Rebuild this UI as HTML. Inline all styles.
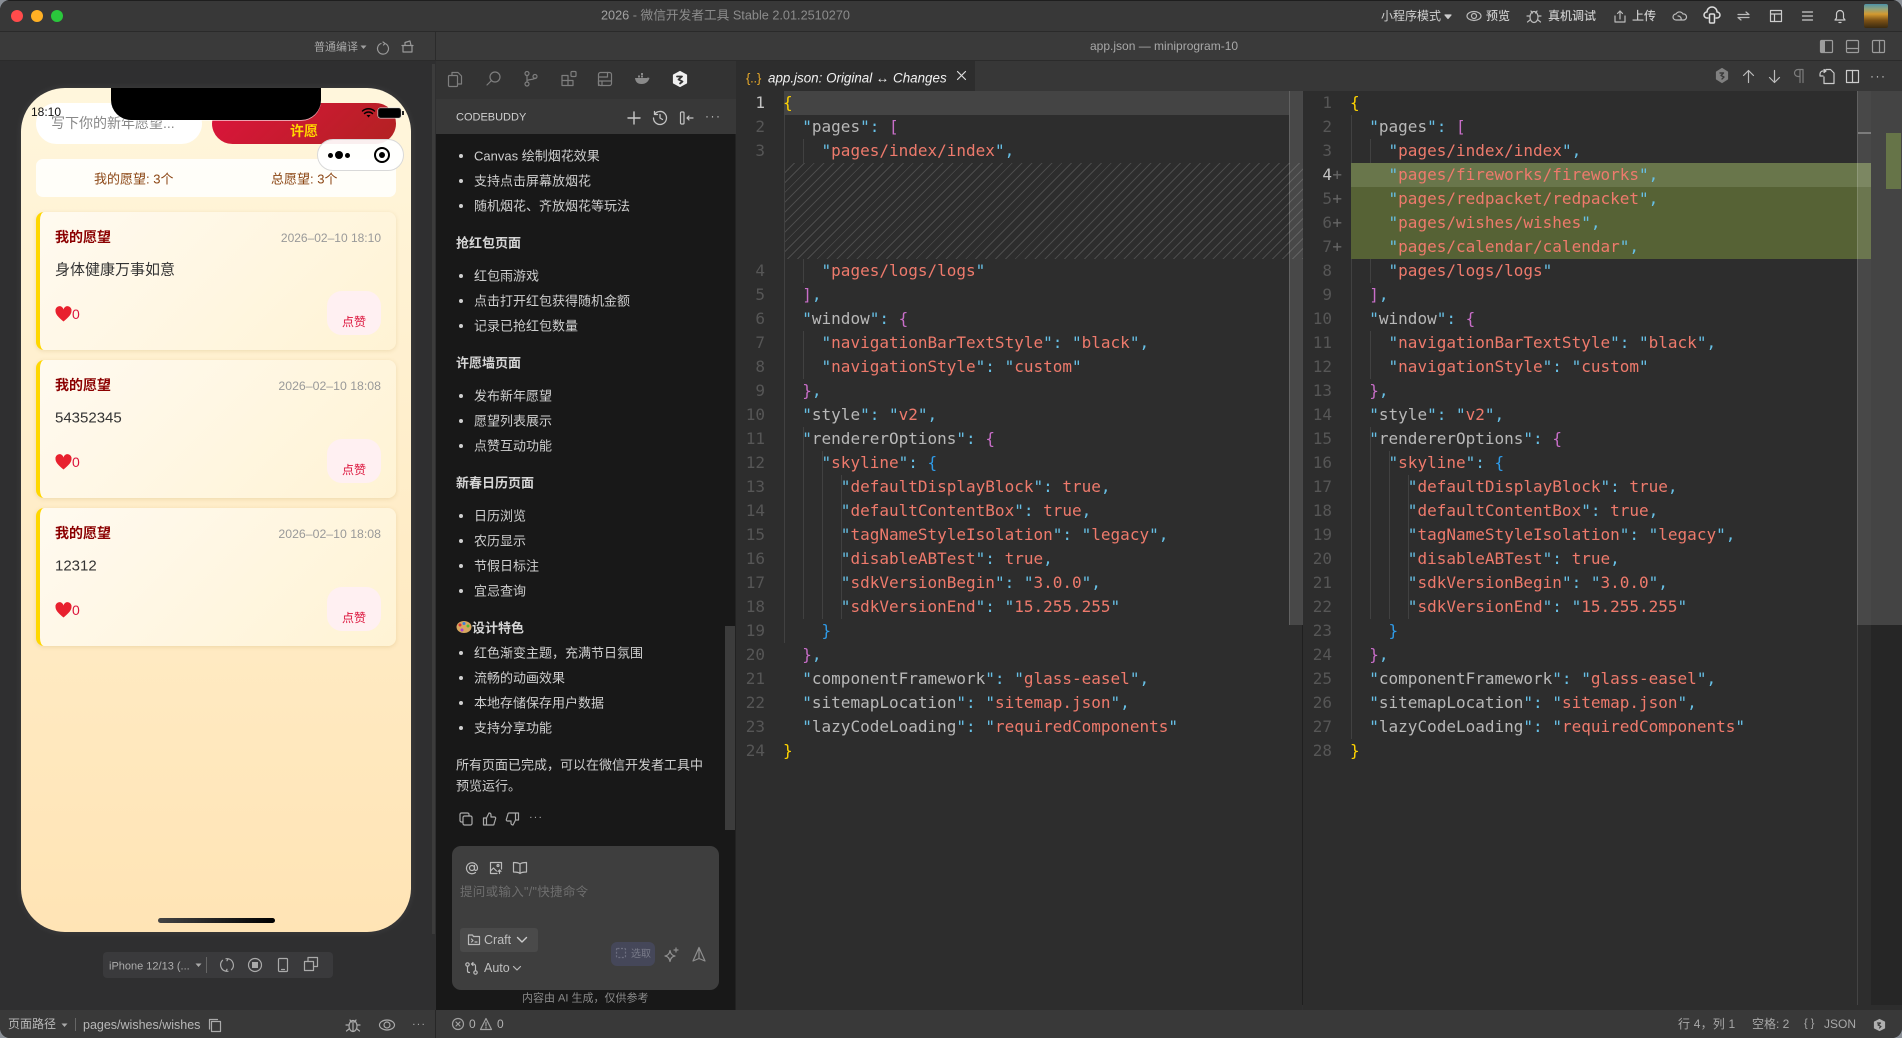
<!DOCTYPE html>
<html lang="zh">
<head>
<meta charset="utf-8">
<title>2026 - 微信开发者工具</title>
<style>
*{box-sizing:border-box}
html,body{margin:0;padding:0;width:1902px;height:1038px;overflow:hidden;background:#8a8f96}
body{font-family:"Liberation Sans","Noto Sans CJK SC",sans-serif;position:relative}
#win{position:absolute;inset:0;background:#2f2f30;border-radius:10px;overflow:hidden}
.a{position:absolute;white-space:nowrap}
.t{position:absolute;white-space:nowrap;line-height:1;transform:translateY(-50%)}
svg{position:absolute;overflow:visible;fill:none;stroke:currentColor;stroke-width:1.2;stroke-linecap:round;stroke-linejoin:round}
.code{position:absolute;font-family:"DejaVu Sans Mono","Liberation Mono",monospace;font-size:16px;line-height:24px}
.code p{margin:0;height:24px;white-space:pre}
.code i{font-style:normal;color:#67c0e6}
.code u{text-decoration:none;color:#b8b8b8}
.code s{text-decoration:none;color:#ee7a6c}
.code b{font-weight:normal}
.y{color:#ffd400}.p{color:#c86ec8}.c{color:#2f9be8}
.num{position:absolute;font-family:"DejaVu Sans Mono","Liberation Mono",monospace;font-size:16px;line-height:24px;color:#565656;text-align:right;width:40px}
.guide{position:absolute;width:1px;background:#414141}
.li{position:absolute;left:474px;font-size:13px;line-height:1;color:#cfcfcf;white-space:nowrap;transform:translateY(-50%)}
.dot{position:absolute;left:459px;width:4px;height:4px;border-radius:50%;background:#d0d0d0;transform:translateY(-50%)}
.h{position:absolute;left:456px;font-size:13px;font-weight:bold;line-height:1;color:#d6d6d6;white-space:nowrap;transform:translateY(-50%)}
.card{position:absolute;left:36px;width:360px;height:138px;border-left:4px solid #ffd700;border-radius:8px;background:linear-gradient(135deg,#fffaf0,#fff3d4);box-shadow:0 1px 4px rgba(160,120,40,.18)}
.like{position:absolute;left:327px;width:54px;height:44px;border-radius:15px;background:#fff0f2}
</style>
</head>
<body>
<div id="win">
<!-- title bar -->
<div class="a" style="left:0;top:0;width:1902px;height:32px;background:#383838;border-top:1px solid #1e1e1e;border-bottom:1px solid #2a2a2a"></div>
<div class="a" style="left:11px;top:10px;width:12px;height:12px;border-radius:50%;background:#ff4b4b"></div>
<div class="a" style="left:31px;top:10px;width:12px;height:12px;border-radius:50%;background:#ffb024"></div>
<div class="a" style="left:51px;top:10px;width:12px;height:12px;border-radius:50%;background:#2ac73c"></div>
<div class="t" style="left:601px;top:16px;font-size:12.7px;color:#8c8c8c"><span style="color:#a2a2a2">2026</span> - 微信开发者工具 Stable 2.01.2510270</div>

<div class="t" style="left:1381px;top:16px;font-size:12px;color:#d0d0d0">小程序模式</div>
<svg style="left:1444px;top:14px;color:#ccc" width="8" height="5"><path d="M1 1h6l-3 3.500z" fill="#ccc"/></svg>
<svg style="left:1466px;top:10px;color:#bbb" width="16" height="12"><ellipse cx="8" cy="6" rx="7" ry="4.500"/><circle cx="8" cy="6" r="2.500"/></svg>
<div class="t" style="left:1486px;top:16px;font-size:12px;font-weight:500;color:#c8c8c8">预览</div>
<svg style="left:1526px;top:8px;color:#bbb" width="16" height="16"><ellipse cx="8" cy="9" rx="4" ry="5.500"/><path d="M5 3l1.500 2M11 3L9.500 5M4 8H1M12 8h3M4 12l-2.500 2M12 12l2.500 2"/></svg>
<div class="t" style="left:1548px;top:16px;font-size:12px;font-weight:500;color:#c8c8c8">真机调试</div>
<svg style="left:1614px;top:10px;color:#bbb" width="12" height="13"><path d="M1 6v6h10V6M6 9V1M3.500 3.500L6 1l2.500 2.500"/></svg>
<div class="t" style="left:1632px;top:16px;font-size:12px;font-weight:500;color:#c8c8c8">上传</div>
<svg style="left:1673px;top:11px;color:#bbb" width="14" height="11"><path d="M3 9a3 3 0 0 1 0-6 4 4 0 0 1 7 0 3 3 0 0 1 1 6zM8 9a3 3 0 0 0-3-4"/></svg>
<svg style="left:1704px;top:8px;color:#ddd" width="16" height="16"><path d="M4 10H3a3 3 0 0 1 0-6 5 5 0 0 1 10 0 3 3 0 0 1 0 6h-1" stroke-width="1.500"/><rect x="5.500" y="6" width="5" height="9" rx="1" stroke-width="1.500"/></svg>
<svg style="left:1737px;top:11px;color:#bbb" width="13" height="10"><path d="M1 3.500h11L9 1M12 6.500H1L4 9"/></svg>
<svg style="left:1770px;top:10px;color:#ccc" width="12" height="12"><rect x=".5" y=".5" width="11" height="11"/><path d="M.5 4h11M4.500 4v7.500"/></svg>
<svg style="left:1802px;top:11px;color:#ccc" width="11" height="10"><path d="M.5 1h10M.5 5h10M.5 9h10"/></svg>
<svg style="left:1834px;top:9px;color:#ccc" width="12" height="14"><path d="M1 11h10L9.500 9V5a3.500 3.500 0 0 0-7 0v4zM5 13.500h2"/></svg>
<div class="a" style="left:1864px;top:4px;width:24px;height:24px;border-radius:2px;background:linear-gradient(180deg,#4d93a8 0,#8fa27c 20%,#d49a30 42%,#7d5216 68%,#3a2a10 100%)"></div>

<!-- second row -->
<div class="a" style="left:0;top:32px;width:1902px;height:29px;background:#3a3a3a;border-bottom:1px solid #2b2b2b"></div>
<div class="a" style="left:435px;top:32px;width:1px;height:29px;background:#2b2b2b"></div>
<div class="t" style="left:314px;top:47.500px;font-size:11px;color:#a8a8a8">普通编译</div>
<svg style="left:360px;top:45px" width="7" height="5"><path d="M.5.500h6L3.500 4z" fill="#a0a0a0" stroke="none"/></svg>
<svg style="left:377px;top:41px;color:#999" width="12" height="13"><path d="M4 2.500a5.500 5.500 0 1 0 4 0M6 1l2 1.500L6.500 4"/></svg>
<svg style="left:401px;top:40px;color:#999" width="13" height="13"><path d="M1 5.500h11M2 5.500V12h9V5.500M4 5.500V2.500l5-1.500 1 4.500"/></svg>
<div class="t" style="left:1090px;top:46px;font-size:12px;color:#a8a8a8">app.json — miniprogram-10</div>
<svg style="left:1820px;top:40px;color:#9c9c9c" width="14" height="13"><rect x=".5" y=".5" width="12" height="12" rx="1"/><rect x="1" y="1" width="4" height="11" fill="#9c9c9c" stroke="none"/></svg>
<svg style="left:1846px;top:40px;color:#9c9c9c" width="14" height="13"><rect x=".5" y=".5" width="12" height="12" rx="1"/><path d="M.5 8.500h12"/></svg>
<svg style="left:1872px;top:40px;color:#9c9c9c" width="14" height="13"><rect x=".5" y=".5" width="12" height="12" rx="1"/><path d="M7.500.5v12"/></svg>

<!-- simulator -->
<div class="a" style="left:432px;top:64px;width:3px;height:870px;background:#3c3c3c"></div>
<div class="a" id="phone" style="left:21px;top:88px;width:390px;height:844px;border-radius:44px;overflow:hidden;background:linear-gradient(180deg,#fff6dc 0,#ffe4b5 100%);box-shadow:0 0 8px rgba(255,255,255,.08)"></div>
<div class="a" style="left:36px;top:103px;width:166px;height:41px;border-radius:21px;background:#fff"></div>
<div class="t" style="left:51px;top:123px;font-size:14px;color:#888">写下你的新年愿望...</div>
<div class="a" style="left:212px;top:103px;width:184px;height:41px;border-radius:21px;background:linear-gradient(135deg,#dc143c,#b22222)"></div>
<div class="t" style="left:290px;top:131px;font-size:14px;font-weight:bold;color:#ffd700">许愿</div>
<div class="a" style="left:36px;top:159px;width:360px;height:38px;border-radius:7px;background:rgba(255,255,255,.85)"></div>
<div class="t" style="left:94px;top:178.500px;font-size:13px;color:#8b4513">我的愿望: 3个</div>
<div class="t" style="left:271px;top:178.500px;font-size:13px;color:#8b4513">总愿望: 3个</div>

<div class="card" style="top:212px"></div>
<div class="t" style="left:55px;top:237px;font-size:14px;font-weight:bold;color:#8b0000">我的愿望</div>
<div class="t" style="right:1521px;top:238px;font-size:12px;color:#999">2026–02–10 18:10</div>
<div class="t" style="left:55px;top:269.500px;font-size:15px;color:#333">身体健康万事如意</div>
<svg style="left:55px;top:306px" width="17" height="16"><path d="M8.500 15.500C3 11 .5 8 .5 5A4 4 0 0 1 8.500 3.500 4 4 0 0 1 16.500 5c0 3-2.500 6-8 10.500z" fill="#e8212e" stroke="none"/></svg>
<div class="t" style="left:72px;top:314px;font-size:14px;color:#dc143c">0</div>
<div class="like" style="top:291px"></div>
<div class="t" style="left:342px;top:322px;font-size:12px;color:#dc143c">点赞</div>

<div class="card" style="top:360px"></div>
<div class="t" style="left:55px;top:385px;font-size:14px;font-weight:bold;color:#8b0000">我的愿望</div>
<div class="t" style="right:1521px;top:386px;font-size:12.300px;color:#999">2026–02–10 18:08</div>
<div class="t" style="left:55px;top:417.500px;font-size:15px;color:#333">54352345</div>
<svg style="left:55px;top:454px" width="17" height="16"><path d="M8.500 15.500C3 11 .5 8 .5 5A4 4 0 0 1 8.500 3.500 4 4 0 0 1 16.500 5c0 3-2.500 6-8 10.500z" fill="#e8212e" stroke="none"/></svg>
<div class="t" style="left:72px;top:462px;font-size:14px;color:#dc143c">0</div>
<div class="like" style="top:439px"></div>
<div class="t" style="left:342px;top:470px;font-size:12px;color:#dc143c">点赞</div>

<div class="card" style="top:508px"></div>
<div class="t" style="left:55px;top:533px;font-size:14px;font-weight:bold;color:#8b0000">我的愿望</div>
<div class="t" style="right:1521px;top:534px;font-size:12.300px;color:#999">2026–02–10 18:08</div>
<div class="t" style="left:55px;top:565.500px;font-size:15px;color:#333">12312</div>
<svg style="left:55px;top:602px" width="17" height="16"><path d="M8.500 15.500C3 11 .5 8 .5 5A4 4 0 0 1 8.500 3.500 4 4 0 0 1 16.500 5c0 3-2.500 6-8 10.500z" fill="#e8212e" stroke="none"/></svg>
<div class="t" style="left:72px;top:610px;font-size:14px;color:#dc143c">0</div>
<div class="like" style="top:587px"></div>
<div class="t" style="left:342px;top:618px;font-size:12px;color:#dc143c">点赞</div>

<!-- notch + status -->
<div class="a" style="left:111px;top:88px;width:210px;height:32px;background:#000;border-radius:0 0 20px 20px;box-shadow:0 1px 0 rgba(255,255,255,.6)"></div>
<div class="t" style="left:31px;top:112px;font-size:12px;color:#111">18:10</div>
<svg style="left:362px;top:108px;color:#000" width="13" height="10"><path d="M.5 3a9 9 0 0 1 12 0M2.500 5.500a6 6 0 0 1 8 0" stroke-width="1.500"/><path d="M4.500 7h4l-2 2.500z" fill="#000" stroke="none"/></svg>
<div class="a" style="left:378px;top:108px;width:23px;height:10px;border:1px solid #222;border-radius:2.500px;background:#000;box-shadow:0 0 0 .5px #ddd"></div>
<div class="a" style="left:402px;top:111px;width:1.500px;height:4px;background:#222"></div>
<div class="a" style="left:317px;top:139px;width:87px;height:32px;border-radius:16px;background:rgba(255,255,255,.93);border:1px solid #d9d9d9"></div>
<div class="a" style="left:328px;top:152.500px;width:5px;height:5px;border-radius:50%;background:#000"></div>
<div class="a" style="left:335px;top:151px;width:8px;height:8px;border-radius:50%;background:#000"></div>
<div class="a" style="left:345px;top:152.500px;width:5px;height:5px;border-radius:50%;background:#000"></div>
<div class="a" style="left:374px;top:147px;width:16px;height:16px;border-radius:50%;border:2.500px solid #000"></div>
<div class="a" style="left:379px;top:152px;width:6px;height:6px;border-radius:50%;background:#000"></div>
<div class="a" style="left:158px;top:918px;width:117px;height:5px;border-radius:3px;background:linear-gradient(90deg,#444,#000)"></div>

<!-- sim toolbar -->
<div class="a" style="left:103px;top:952px;width:230px;height:26px;border-radius:4px;background:#3a3a3c"></div>
<div class="t" style="left:109px;top:967px;font-size:11px;color:#adadad">iPhone 12/13 (...</div>
<svg style="left:195px;top:963px" width="7" height="5"><path d="M.5.500h6L3.500 4z" fill="#aaa" stroke="none"/></svg>
<div class="a" style="left:206px;top:957px;width:1px;height:16px;background:#666"></div>
<svg style="left:220px;top:958px;color:#aaa" width="14" height="14"><path d="M8 .7a6.500 6.500 0 0 1 3.500 11M6 13.300a6.500 6.500 0 0 1-3.500-11M6 .7l2 0-1 2M8 13.300l-2 0 1-2"/></svg>
<svg style="left:248px;top:958px;color:#aaa" width="14" height="14"><circle cx="7" cy="7" r="6.500"/><rect x="4" y="4" width="6" height="6" fill="#aaa" stroke="none"/></svg>
<svg style="left:278px;top:958px;color:#aaa" width="10" height="14"><rect x=".5" y=".5" width="9" height="13" rx="1"/><path d="M3.500 11.500h3"/></svg>
<svg style="left:304px;top:957px;color:#aaa" width="14" height="14"><rect x=".5" y="4.500" width="9" height="9"/><path d="M4 4.500V.5h9.500v9h-4"/></svg>

<!-- codebuddy panel -->
<div class="a" style="left:436px;top:61px;width:300px;height:38px;background:#333"></div>
<div class="a" style="left:436px;top:99px;width:300px;height:35px;background:#383838"></div>
<div class="a" style="left:436px;top:134px;width:299px;height:876px;background:#181818"></div>
<div class="a" style="left:735px;top:134px;width:1px;height:876px;background:#222"></div>
<svg style="left:448px;top:72px;color:#7e7e7e" width="14" height="15"><rect x=".5" y="3.500" width="9" height="11" rx="1"/><path d="M4 3.500V.5h6l3.500 3.500v8H9.500"/></svg>
<svg style="left:486px;top:71px;color:#7e7e7e" width="15" height="15"><circle cx="9" cy="6" r="5"/><path d="M5.500 9.500L1 14"/></svg>
<svg style="left:524px;top:71px;color:#7e7e7e" width="14" height="16"><circle cx="3" cy="2.500" r="2"/><circle cx="3" cy="13" r="2"/><circle cx="11" cy="5.500" r="2"/><path d="M3 4.500v6.500M3 10c0-2 8-1 8-3"/></svg>
<svg style="left:561px;top:71px;color:#7e7e7e" width="16" height="16"><path d="M1 4.500h6v10H1zM1 9.500h11v5H7"/><rect x="10" y=".5" width="5" height="5" rx="1"/></svg>
<svg style="left:598px;top:72px;color:#7e7e7e" width="14" height="14"><rect x=".5" y=".5" width="13" height="13" rx="2"/><path d="M.5 5h9V.5M.5 13.500V9h13M4 9v4.500"/></svg>
<svg style="left:634px;top:73px;color:#8a8a8a" width="16" height="12"><path d="M1 5h12c1-1 2 0 2.500 0-1 3-3 6-8 6-4 0-6-2-6.500-6z" fill="#8a8a8a" stroke="none"/><rect x="4" y="2.500" width="2" height="2" fill="#8a8a8a" stroke="none"/><rect x="7" y="2.500" width="2" height="2" fill="#8a8a8a" stroke="none"/><rect x="7" y="0" width="2" height="2" fill="#8a8a8a" stroke="none"/></svg>
<svg style="left:673px;top:71px" width="14" height="16"><path d="M7 .5L13.500 4v8L7 15.500.5 12V4z" fill="#f0f0f0" stroke="#f0f0f0"/><path d="M4 5.500h5L5.500 8.500 9.500 10.500 7 12.500" stroke="#333" stroke-width="1.800"/></svg>

<div class="t" style="left:456px;top:118px;font-size:11px;color:#cfcfcf">CODEBUDDY</div>
<svg style="left:628px;top:112px;color:#c8c8c8" width="12" height="12"><path d="M6 0v12M0 6h12" stroke-width="1.400"/></svg>
<svg style="left:653px;top:111px;color:#c4c4c4" width="14" height="14"><path d="M1.500 3.500A6.500 6.500 0 1 1 .5 7M1.500.5v3h3M7 3.500V7l2.500 1.500" stroke-width="1.300"/></svg>
<svg style="left:680px;top:111px;color:#c4c4c4" width="14" height="14"><rect x=".5" y="1" width="3.500" height="12" rx="1"/><path d="M13 7H7M9 5L7 7l2 2"/></svg>
<div class="t" style="left:705px;top:116px;font-size:12px;letter-spacing:1.500px;color:#c4c4c4">···</div>

<i class="dot" style="top:156px"></i><div class="li" style="top:155.500px">Canvas 绘制烟花效果</div>
<i class="dot" style="top:181px"></i><div class="li" style="top:180.500px">支持点击屏幕放烟花</div>
<i class="dot" style="top:206px"></i><div class="li" style="top:205.500px">随机烟花、齐放烟花等玩法</div>
<div class="h" style="top:242.500px">抢红包页面</div>
<i class="dot" style="top:276px"></i><div class="li" style="top:275.500px">红包雨游戏</div>
<i class="dot" style="top:301px"></i><div class="li" style="top:300.500px">点击打开红包获得随机金额</div>
<i class="dot" style="top:326px"></i><div class="li" style="top:325.500px">记录已抢红包数量</div>
<div class="h" style="top:362.500px">许愿墙页面</div>
<i class="dot" style="top:396px"></i><div class="li" style="top:395.500px">发布新年愿望</div>
<i class="dot" style="top:421px"></i><div class="li" style="top:420.500px">愿望列表展示</div>
<i class="dot" style="top:446px"></i><div class="li" style="top:445.500px">点赞互动功能</div>
<div class="h" style="top:482.500px">新春日历页面</div>
<i class="dot" style="top:516px"></i><div class="li" style="top:515.500px">日历浏览</div>
<i class="dot" style="top:541px"></i><div class="li" style="top:540.500px">农历显示</div>
<i class="dot" style="top:566px"></i><div class="li" style="top:565.500px">节假日标注</div>
<i class="dot" style="top:591px"></i><div class="li" style="top:590.500px">宜忌查询</div>
<svg style="left:456px;top:620px" width="16" height="14"><ellipse cx="8" cy="7" rx="7.500" ry="6" fill="#d8a860" stroke="none"/><circle cx="4" cy="5" r="1.500" fill="#d33" stroke="none"/><circle cx="8" cy="3.500" r="1.500" fill="#3a7fd8" stroke="none"/><circle cx="12" cy="6" r="1.500" fill="#5b3" stroke="none"/><circle cx="6" cy="10" r="1.500" fill="#a4c" stroke="none"/></svg>
<div class="h" style="left:472px;top:627.500px">设计特色</div>
<i class="dot" style="top:653px"></i><div class="li" style="top:652.500px">红色渐变主题，充满节日氛围</div>
<i class="dot" style="top:678px"></i><div class="li" style="top:677.500px">流畅的动画效果</div>
<i class="dot" style="top:703px"></i><div class="li" style="top:702.500px">本地存储保存用户数据</div>
<i class="dot" style="top:728px"></i><div class="li" style="top:727.500px">支持分享功能</div>
<div class="li" style="left:456px;top:764.500px">所有页面已完成，可以在微信开发者工具中</div>
<div class="li" style="left:456px;top:785.500px">预览运行。</div>
<svg style="left:459px;top:812px;color:#aaa" width="14" height="14"><rect x="4" y="4" width="9" height="9" rx="1.500"/><path d="M4 10H2.500A1.500 1.500 0 0 1 1 8.500v-6A1.500 1.500 0 0 1 2.500 1h6A1.500 1.500 0 0 1 10 2.500V4"/></svg>
<svg style="left:483px;top:812px;color:#aaa" width="13" height="14"><path d="M3.500 6L6 1c1.500 0 2 1 2 2v2h3.500c1 0 1.500 1 1 2l-1.500 5c0 .5-.5 1-1 1H3.500zM3.500 6H.5v7h3"/></svg>
<svg style="left:506px;top:812px;color:#aaa" width="13" height="14"><path d="M9.500 8L7 13c-1.500 0-2-1-2-2V9H1.500c-1 0-1.500-1-1-2L2 2c0-.5.500-1 1-1h6.500zM9.500 8h3V1h-3"/></svg>
<div class="t" style="left:529px;top:818px;font-size:11px;letter-spacing:1px;color:#aaa">···</div>
<div class="a" style="left:725px;top:626px;width:10px;height:204px;background:#3c3c3c"></div>

<div class="a" style="left:452px;top:846px;width:267px;height:144px;border-radius:9px;background:#3e3e3e"></div>
<svg style="left:466px;top:862px;color:#bbb" width="12" height="12"><circle cx="6" cy="6" r="2.500"/><path d="M8.500 3.500V7c0 2 3 2 3-1a5.500 5.500 0 1 0-2 4.500"/></svg>
<svg style="left:490px;top:862px;color:#bbb" width="12" height="12"><path d="M7 11.500H.5V.5h11V7"/><path d="M.5 9l3-3 3 3M9.500 8v3.500M8 9.500l1.500-1.500 1.500 1.500"/><circle cx="8" cy="3.500" r="1"/></svg>
<svg style="left:513px;top:862px;color:#bbb" width="14" height="12"><path d="M7 2c-1-1-3-1.500-6.500-1.500v9.500C4 10 6 10.500 7 11.500c1-1 3-1.500 6.500-1.500V.5C10 .5 8 1 7 2zv9.500"/></svg>
<div class="t" style="left:460px;top:892px;font-size:12.500px;letter-spacing:.3px;color:#6e6e6e">提问或输入"/"快捷命令</div>
<div class="a" style="left:460px;top:928px;width:78px;height:24px;border-radius:3px;background:#4a4a4a"></div>
<svg style="left:468px;top:934px;color:#bbb" width="12" height="11"><path d="M.5 1h4l1 1.500h6V10.500H.5zM3.500 5l1.500 1.500L3.500 8M7 8h2"/></svg>
<div class="t" style="left:484px;top:940px;font-size:12.500px;color:#bfbfbf">Craft</div>
<svg style="left:517px;top:937px;color:#ccc" width="10" height="6"><path d="M.5.500L5 5 9.500.5" stroke-width="1.400"/></svg>
<svg style="left:465px;top:962px;color:#bbb" width="13" height="13"><circle cx="2.500" cy="2.500" r="1.700"/><circle cx="10.500" cy="10.500" r="1.700"/><path d="M2.500 4.500V9c0 1 1 1.500 2 1.500M10.500 8.500V4c0-1-1-2-2-2H6.500M8 0.500L6.500 2 8 3.500"/></svg>
<div class="t" style="left:484px;top:968px;font-size:12.500px;color:#bfbfbf">Auto</div>
<svg style="left:513px;top:966px;color:#bbb" width="8" height="5"><path d="M.5.500L4 4 7.500.5"/></svg>
<div class="a" style="left:611px;top:942px;width:44px;height:24px;border-radius:6px;background:#454759"></div>
<svg style="left:616px;top:948px;color:#6d6f80" width="11" height="11"><rect x=".5" y=".5" width="9" height="9" rx="1" stroke-dasharray="2 1.500" stroke-linecap="butt"/></svg>
<div class="t" style="left:631px;top:955px;font-size:10px;color:#7a7c8a">选取</div>
<svg style="left:664px;top:947px;color:#8e8e8e" width="15" height="15"><path d="M6 3.500C6.500 7 8 8.500 11 9 8 9.500 6.500 11 6 14.500 5.500 11 4 9.500 1 9 4 8.500 5.500 7 6 3.500zM12 1v4M10 3h4"/></svg>
<svg style="left:692px;top:947px;color:#8e8e8e" width="14" height="15"><path d="M7 .5L13 14 7 11.500 1 14zM7 .5v11"/></svg>
<div class="t" style="left:522px;top:999px;font-size:11px;color:#8a8a8a">内容由 AI 生成，仅供参考</div>

<!-- tabs -->
<div class="a" style="left:736px;top:61px;width:1166px;height:30px;background:#373737"></div>
<div class="a" style="left:736px;top:61px;width:239px;height:30px;background:#2d2d2d"></div>
<div class="t" style="left:746px;top:78px;font-size:13px;color:#e5a82a;letter-spacing:-.2px">{..}</div>
<div class="t" style="left:768px;top:78px;font-size:13.400px;font-style:italic;color:#f0f0f0">app.json: Original ↔ Changes</div>
<svg style="left:957px;top:71px;color:#ddd" width="9" height="9"><path d="M.5.500l8 8M8.500.5l-8 8"/></svg>
<svg style="left:1716px;top:68px" width="12" height="15"><path d="M6 .5l5.500 3.500v7L6 14.500.5 11V4z" fill="#808080" stroke="#808080"/><path d="M4 5h3.500L5 7.500 8 9 6 11" stroke="#3a3a3a" stroke-width="1.400"/></svg>
<svg style="left:1743px;top:70px;color:#bbb" width="11" height="13"><path d="M5.500 12.500V.5M.5 5.500l5-5 5 5"/></svg>
<svg style="left:1769px;top:70px;color:#bbb" width="11" height="13"><path d="M5.500.5v12M.5 7.500l5 5 5-5"/></svg>
<svg style="left:1794px;top:69px;color:#7c7c7c" width="10" height="14"><path d="M9 .5H4a3.500 3.500 0 0 0 0 7h2M6 .5v13M9 .5v13"/></svg>
<svg style="left:1819px;top:69px;color:#ccc" width="16" height="15"><path d="M5 8v6.500h10V4l-3.500-3.500H7M1 5a3 3 0 0 1 3-3h3M5 .5L7 2 5 3.500M1 5v2h3"/></svg>
<svg style="left:1846px;top:70px;color:#ccc" width="13" height="13"><rect x=".5" y=".5" width="12" height="12"/><path d="M6.500.5v12"/></svg>
<div class="t" style="left:1870px;top:76px;font-size:12px;letter-spacing:1.500px;color:#ccc">···</div>

<!-- left editor -->
<div class="a" style="left:736px;top:91px;width:566px;height:919px;background:#2d2d2d"></div>
<div class="a" style="left:784px;top:91px;width:505px;height:24px;background:#444"></div>
<div class="a" style="left:784px;top:163px;width:519px;height:96px;background:repeating-linear-gradient(-45deg,#4b4b4b 0,#4b4b4b 1px,transparent 1px,transparent 7px)"></div>
<div class="guide" style="left:784px;top:115px;height:528px"></div>
<div class="guide" style="left:803px;top:139px;height:24px"></div>
<div class="guide" style="left:803px;top:259px;height:24px"></div>
<div class="guide" style="left:803px;top:331px;height:48px"></div>
<div class="guide" style="left:803px;top:427px;height:192px"></div>
<div class="guide" style="left:822px;top:451px;height:168px"></div>
<div class="guide" style="left:841px;top:475px;height:144px"></div>

<div class="num" style="left:725px;top:91px"><span style="color:#c4c4c4">1</span><br>2<br>3<br><br><br><br><br>4<br>5<br>6<br>7<br>8<br>9<br>10<br>11<br>12<br>13<br>14<br>15<br>16<br>17<br>18<br>19<br>20<br>21<br>22<br>23<br>24</div>

<div class="code" style="left:783px;top:91px">
<p><b class="y">{</b></p>
<p>  <i>"</i><u>pages</u><i>":</i> <b class="p">[</b></p>
<p>    <i>"</i><s>pages/index/index</s><i>",</i></p>
<div style="height:96px"></div>
<p>    <i>"</i><s>pages/logs/logs</s><i>"</i></p>
<p>  <b class="p">]</b><i>,</i></p>
<p>  <i>"</i><u>window</u><i>":</i> <b class="p">{</b></p>
<p>    <i>"</i><s>navigationBarTextStyle</s><i>":</i> <i>"</i><s>black</s><i>",</i></p>
<p>    <i>"</i><s>navigationStyle</s><i>":</i> <i>"</i><s>custom</s><i>"</i></p>
<p>  <b class="p">}</b><i>,</i></p>
<p>  <i>"</i><u>style</u><i>":</i> <i>"</i><s>v2</s><i>",</i></p>
<p>  <i>"</i><u>rendererOptions</u><i>":</i> <b class="p">{</b></p>
<p>    <i>"</i><s>skyline</s><i>":</i> <b class="c">{</b></p>
<p>      <i>"</i><s>defaultDisplayBlock</s><i>":</i> <s>true</s><i>,</i></p>
<p>      <i>"</i><s>defaultContentBox</s><i>":</i> <s>true</s><i>,</i></p>
<p>      <i>"</i><s>tagNameStyleIsolation</s><i>":</i> <i>"</i><s>legacy</s><i>",</i></p>
<p>      <i>"</i><s>disableABTest</s><i>":</i> <s>true</s><i>,</i></p>
<p>      <i>"</i><s>sdkVersionBegin</s><i>":</i> <i>"</i><s>3.0.0</s><i>",</i></p>
<p>      <i>"</i><s>sdkVersionEnd</s><i>":</i> <i>"</i><s>15.255.255</s><i>"</i></p>
<p>    <b class="c">}</b></p>
<p>  <b class="p">}</b><i>,</i></p>
<p>  <i>"</i><u>componentFramework</u><i>":</i> <i>"</i><s>glass-easel</s><i>",</i></p>
<p>  <i>"</i><u>sitemapLocation</u><i>":</i> <i>"</i><s>sitemap.json</s><i>",</i></p>
<p>  <i>"</i><u>lazyCodeLoading</u><i>":</i> <i>"</i><s>requiredComponents</s><i>"</i></p>
<p><b class="y">}</b></p>
</div>
<div class="a" style="left:1289px;top:91px;width:14px;height:534px;background:rgba(255,255,255,.13);border-left:1px solid rgba(255,255,255,.14)"></div>
<div class="a" style="left:1302px;top:625px;width:1px;height:380px;background:#1f1f1f"></div>

<!-- right editor -->
<div class="a" style="left:1303px;top:91px;width:599px;height:919px;background:#2d2d2d"></div>
<div class="a" style="left:1351px;top:163px;width:520px;height:96px;background:#566235"></div>
<div class="a" style="left:1351px;top:163px;width:520px;height:24px;background:#69764b"></div>
<div class="guide" style="left:1351px;top:115px;height:48px"></div>
<div class="guide" style="left:1351px;top:259px;height:480px"></div>
<div class="guide" style="left:1370px;top:139px;height:24px"></div>
<div class="guide" style="left:1370px;top:259px;height:24px"></div>
<div class="guide" style="left:1370px;top:331px;height:48px"></div>
<div class="guide" style="left:1370px;top:427px;height:192px"></div>
<div class="guide" style="left:1389px;top:451px;height:168px"></div>
<div class="guide" style="left:1408px;top:475px;height:144px"></div>

<div class="num" style="left:1292px;top:91px">1<br>2<br>3<br><span style="color:#c4c4c4">4</span><br>5<br>6<br>7<br>8<br>9<br>10<br>11<br>12<br>13<br>14<br>15<br>16<br>17<br>18<br>19<br>20<br>21<br>22<br>23<br>24<br>25<br>26<br>27<br>28</div>
<div class="num" style="left:1304px;top:163px;color:#666;width:38px">+<br>+<br>+<br>+</div>

<div class="code" style="left:1350px;top:91px">
<p><b class="y">{</b></p>
<p>  <i>"</i><u>pages</u><i>":</i> <b class="p">[</b></p>
<p>    <i>"</i><s>pages/index/index</s><i>",</i></p>
<p>    <i>"</i><s>pages/fireworks/fireworks</s><i>",</i></p>
<p>    <i>"</i><s>pages/redpacket/redpacket</s><i>",</i></p>
<p>    <i>"</i><s>pages/wishes/wishes</s><i>",</i></p>
<p>    <i>"</i><s>pages/calendar/calendar</s><i>",</i></p>
<p>    <i>"</i><s>pages/logs/logs</s><i>"</i></p>
<p>  <b class="p">]</b><i>,</i></p>
<p>  <i>"</i><u>window</u><i>":</i> <b class="p">{</b></p>
<p>    <i>"</i><s>navigationBarTextStyle</s><i>":</i> <i>"</i><s>black</s><i>",</i></p>
<p>    <i>"</i><s>navigationStyle</s><i>":</i> <i>"</i><s>custom</s><i>"</i></p>
<p>  <b class="p">}</b><i>,</i></p>
<p>  <i>"</i><u>style</u><i>":</i> <i>"</i><s>v2</s><i>",</i></p>
<p>  <i>"</i><u>rendererOptions</u><i>":</i> <b class="p">{</b></p>
<p>    <i>"</i><s>skyline</s><i>":</i> <b class="c">{</b></p>
<p>      <i>"</i><s>defaultDisplayBlock</s><i>":</i> <s>true</s><i>,</i></p>
<p>      <i>"</i><s>defaultContentBox</s><i>":</i> <s>true</s><i>,</i></p>
<p>      <i>"</i><s>tagNameStyleIsolation</s><i>":</i> <i>"</i><s>legacy</s><i>",</i></p>
<p>      <i>"</i><s>disableABTest</s><i>":</i> <s>true</s><i>,</i></p>
<p>      <i>"</i><s>sdkVersionBegin</s><i>":</i> <i>"</i><s>3.0.0</s><i>",</i></p>
<p>      <i>"</i><s>sdkVersionEnd</s><i>":</i> <i>"</i><s>15.255.255</s><i>"</i></p>
<p>    <b class="c">}</b></p>
<p>  <b class="p">}</b><i>,</i></p>
<p>  <i>"</i><u>componentFramework</u><i>":</i> <i>"</i><s>glass-easel</s><i>",</i></p>
<p>  <i>"</i><u>sitemapLocation</u><i>":</i> <i>"</i><s>sitemap.json</s><i>",</i></p>
<p>  <i>"</i><u>lazyCodeLoading</u><i>":</i> <i>"</i><s>requiredComponents</s><i>"</i></p>
<p><b class="y">}</b></p>
</div>
<div class="a" style="left:1857px;top:91px;width:14px;height:534px;background:rgba(255,255,255,.13);border-left:1px solid rgba(255,255,255,.14)"></div>
<div class="a" style="left:1857px;top:625px;width:1px;height:380px;background:#444"></div>
<div class="a" style="left:1858px;top:132px;width:13px;height:2px;background:#7c7c7c"></div>
<div class="a" style="left:1871px;top:91px;width:31px;height:914px;background:#262626"></div>
<div class="a" style="left:1871px;top:91px;width:31px;height:534px;background:#444"></div>
<div class="a" style="left:1886px;top:133px;width:15px;height:56px;background:#667448"></div>

<!-- status bar -->
<div class="a" style="left:0;top:1010px;width:1902px;height:28px;background:#393939"></div>
<div class="a" style="left:435px;top:1010px;width:1px;height:28px;background:#272727"></div>
<div class="t" style="left:8px;top:1023.500px;font-size:12px;color:#b8b8b8">页面路径</div>
<svg style="left:61px;top:1023px" width="7" height="5"><path d="M.5.500h6L3.500 4z" fill="#aaa" stroke="none"/></svg>
<div class="a" style="left:75px;top:1018px;width:1px;height:13px;background:#666"></div>
<div class="t" style="left:83px;top:1024.500px;font-size:12.500px;color:#b8b8b8">pages/wishes/wishes</div>
<svg style="left:209px;top:1019px;color:#aaa" width="12" height="13"><rect x="2.500" y="2.500" width="9" height="10"/><path d="M.5 10V.5h8"/></svg>
<svg style="left:345px;top:1018px;color:#aaa" width="16" height="15"><ellipse cx="8" cy="8" rx="4" ry="5.500"/><path d="M5 2l1.500 2M11 2L9.500 4M4 7H1M12 7h3M4 11l-2.500 2M12 11l2.500 2M8 3v10"/></svg>
<svg style="left:379px;top:1019px;color:#aaa" width="16" height="12"><ellipse cx="8" cy="6" rx="7.500" ry="5"/><circle cx="8" cy="6" r="3"/></svg>
<div class="t" style="left:412px;top:1025px;font-size:11px;letter-spacing:1px;color:#aaa">···</div>
<svg style="left:452px;top:1018px;color:#a0a0a0" width="12" height="12"><circle cx="6" cy="6" r="5.500"/><path d="M4 4l4 4M8 4l-4 4"/></svg>
<div class="t" style="left:469px;top:1024px;font-size:12px;color:#b0b0b0">0</div>
<svg style="left:480px;top:1018px;color:#a0a0a0" width="12" height="12"><path d="M6 .5l5.500 11H.5zM6 4.500v3.500M6 9.500v.5"/></svg>
<div class="t" style="left:497px;top:1024px;font-size:12px;color:#b0b0b0">0</div>
<div class="t" style="left:1678px;top:1024px;font-size:12px;letter-spacing:.2px;color:#a8a8a8">行 4，列 1</div>
<div class="t" style="left:1752px;top:1024px;font-size:12px;color:#a8a8a8">空格: 2</div>
<div class="t" style="left:1804px;top:1024px;font-size:11px;color:#a8a8a8">{ }</div>
<div class="t" style="left:1824px;top:1024px;font-size:12px;color:#a8a8a8">JSON</div>
<svg style="left:1874px;top:1019px" width="11" height="12"><path d="M5.500.5L10.500 3v6l-5 2.500-5-2.500V3z" fill="#b0b0b0" stroke="#b0b0b0"/><path d="M3.500 4h3L4 6l3 1.500-1.500 1.500" stroke="#393939" stroke-width="1.200"/></svg>
</div>
</body>
</html>
